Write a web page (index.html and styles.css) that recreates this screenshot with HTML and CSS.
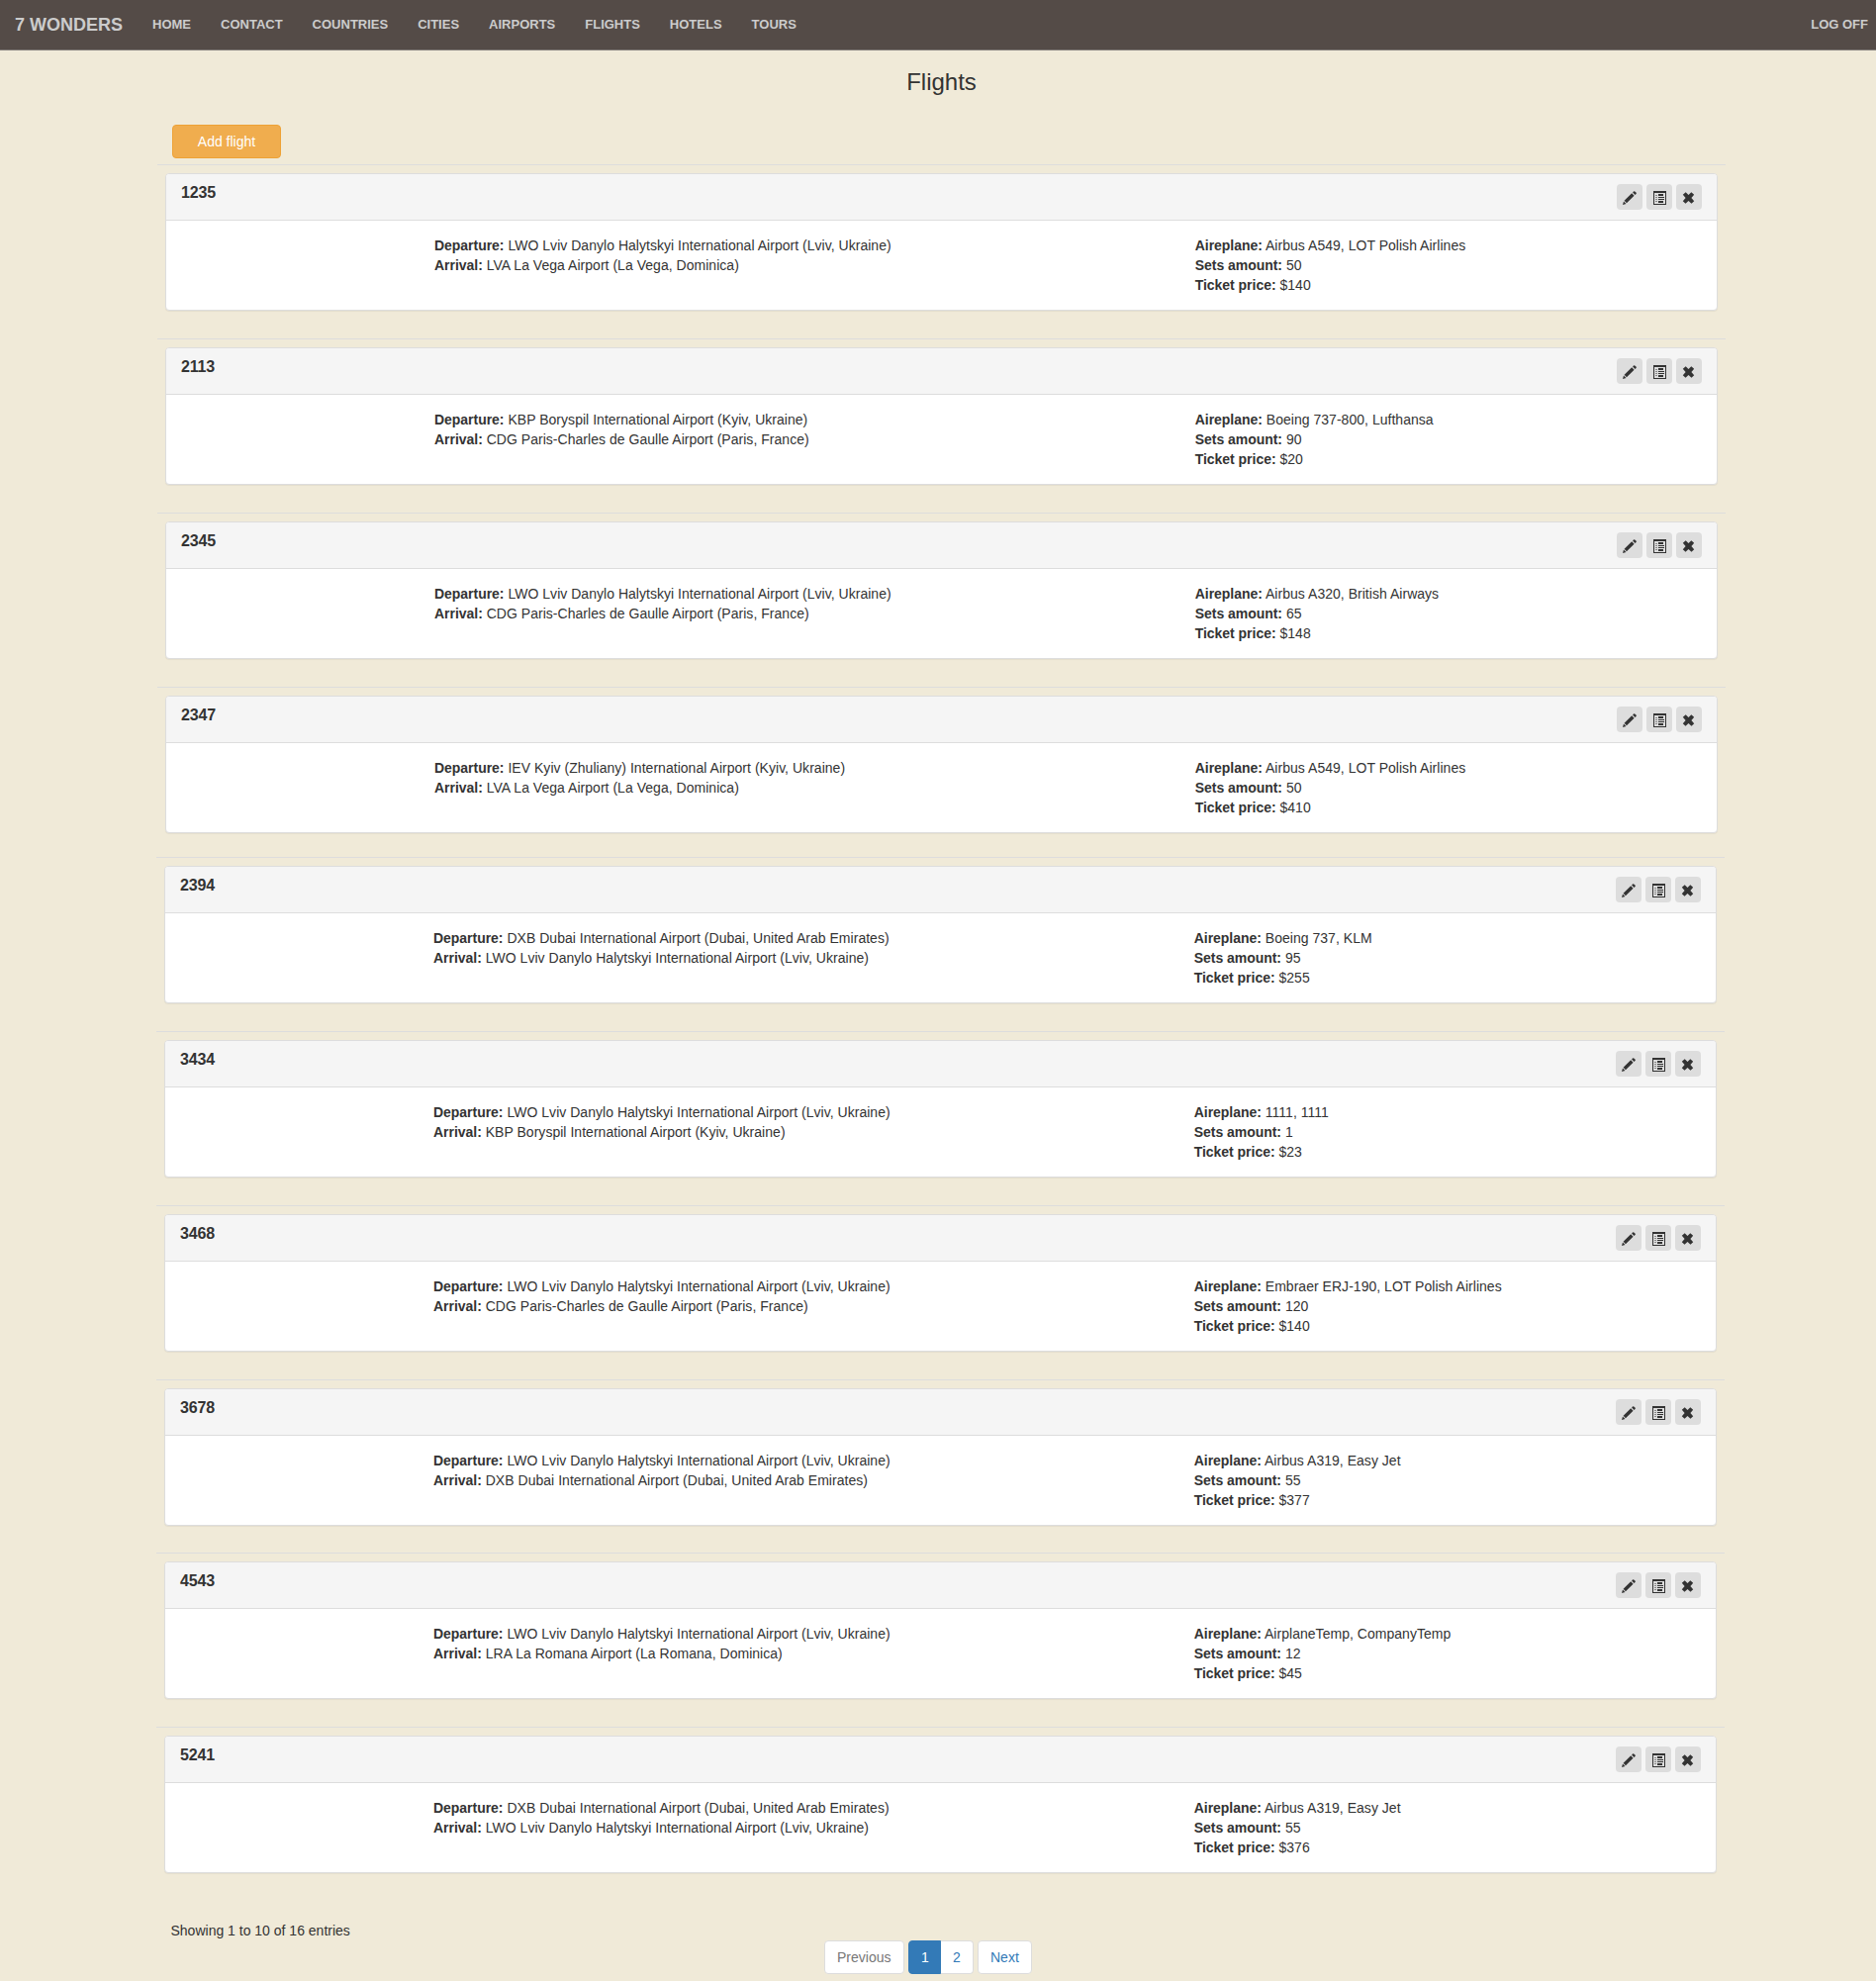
FILE: index.html
```html
<!DOCTYPE html>
<html lang="en">
<head>
<meta charset="utf-8">
<title>Flights</title>
<link rel="stylesheet" href="styles.css">
</head>
<body>
<svg class="sprite" aria-hidden="true">
  <symbol id="pencil" viewBox="0 0 14 14"><path d="M0 14l1-3.500 2.500 2.500zM1.600 9.800l7.600-7.500 2.400 2.400-7.600 7.500zM10.100 1.500l.9-.9q.8-.7 1.600.1l.9.9q.7.8 0 1.500l-1 .9z"/></symbol>
  <symbol id="list" viewBox="0 0 14 14"><path fill-rule="evenodd" d="M1 0h13v14H1zM2 2v11h11V2z"/><path d="M6 3h5v2H6zm0 3h6v1H6zm0 2h6v1H6zm0 2h5v2H6z"/><path opacity=".5" d="M3 4h2v1H3zm0 2h2v1H3zm0 2h2v1H3zm0 2h2v1H3z"/></symbol>
  <symbol id="cross" viewBox="0 0 14 14"><path d="M3.700 1.300L6.500 4 9.300 1.300 12.200 3.700 9.400 7 12.200 10.300 9.500 12.700 6.500 10 3.500 12.700.8 10.300 3.600 7 .8 3.700z"/></symbol>
</svg>
<nav class="navbar">
  <a class="brand">7 WONDERS</a>
  <a>HOME</a><a>CONTACT</a><a>COUNTRIES</a><a>CITIES</a><a>AIRPORTS</a><a>FLIGHTS</a><a>HOTELS</a><a>TOURS</a>
  <a class="logoff">LOG OFF</a>
</nav>
<main>
  <h1>Flights</h1>
  <button class="add">Add flight</button>
  <div id="flights"></div>
  <p class="info">Showing 1 to 10 of 16 entries</p>
  <div class="pagination">
    <a class="page previous">Previous</a>
    <span class="numbers"><a class="page active">1</a><a class="page">2</a></span>
    <a class="page next">Next</a>
  </div>
</main>
<script src="flights.js"></script>
</body>
</html>
```
FILE: styles.css
```css
* { box-sizing: border-box; }
body { margin: 0; background: #f0ead8; color: #333; font: 14px/20px "Liberation Sans", Arial, sans-serif; }
.sprite { display: none; }
.navbar { display: flex; height: 51px; background: #544b47; border-bottom: 1px solid #807b77; padding-left: 15px; color: #ccc; font-weight: bold; font-size: 13px; line-height: 50px; }
.navbar a { padding: 0 15px; white-space: nowrap; }
.navbar .brand { padding: 0 15px 0 0; font-size: 18px; }
.navbar .logoff { margin-left: auto; padding-right: 8px; }
main { display: flow-root; }
h1 { margin: 19px 0 0; padding-left: 7px; text-align: center; font-weight: normal; font-size: 24px; line-height: 26px; }
.add { display: block; width: 110px; height: 34px; margin: 30px 0 6px 174px; padding: 0; border: 1px solid #eea236; border-radius: 4px; background: #f0ad4e; color: #fff; font: inherit; }
.flight { width: 1585px; height: 176px; margin-left: 159px; border-top: 1px solid #ddd; padding: 8px; }
.flight.tight { height: 172px; }
.flight.narrow { height: 175px; }
.flight.shifted { margin-left: 158px; }
.panel { height: 139px; border: 1px solid #ddd; border-radius: 4px; background: #fff; box-shadow: 0 1px 1px rgba(0,0,0,.05); overflow: hidden; }
.heading { display: flex; justify-content: space-between; height: 47px; padding: 10px 15px; background: #f5f5f5; border-bottom: 1px solid #ddd; }
.heading h2 { margin: 0; font-size: 16px; line-height: 17px; letter-spacing: -0.15px; }
.actions { display: flex; gap: 4px; }
.actions span { display: flex; justify-content: center; width: 26px; height: 26px; padding-top: 7px; border-radius: 4px; background: #ddd; color: #333; }
.actions svg { width: 14px; height: 14px; fill: currentColor; }
.body { display: grid; grid-template-columns: 768.7px 1fr; padding: 15px 15px 15px 271px; white-space: nowrap; letter-spacing: 0.03px; }
.body b { letter-spacing: -0.03px; }
.info { margin: 20px 0 0 172.500px; height: 20px; }
.pagination { display: flex; gap: 4px; margin-left: 833px; height: 34px; }
.numbers { display: flex; }
.page { padding: 6px 12px; border: 1px solid #ddd; border-radius: 4px; background: #fff; color: #337ab7; }
.previous { width: 81px; color: #777; }
.next { width: 55px; }
.numbers .page { width: 33px; }
.numbers .page + .page { border-radius: 0 4px 4px 0; border-left: 0; }
.numbers .active { background: #337ab7; border-color: #337ab7; color: #fff; border-radius: 4px 0 0 4px; }
```
FILE: flights.js
```js
const LWO = 'LWO Lviv Danylo Halytskyi International Airport (Lviv, Ukraine)';
const LVA = 'LVA La Vega Airport (La Vega, Dominica)';
const KBP = 'KBP Boryspil International Airport (Kyiv, Ukraine)';
const CDG = 'CDG Paris-Charles de Gaulle Airport (Paris, France)';
const IEV = 'IEV Kyiv (Zhuliany) International Airport (Kyiv, Ukraine)';
const DXB = 'DXB Dubai International Airport (Dubai, United Arab Emirates)';
const LRA = 'LRA La Romana Airport (La Romana, Dominica)';
const flights = [
  ['1235', LWO, LVA, 'Airbus A549, LOT Polish Airlines', 50, 140, ''],
  ['2113', KBP, CDG, 'Boeing 737-800, Lufthansa', 90, 20, ''],
  ['2345', LWO, CDG, 'Airbus A320, British Airways', 65, 148, ''],
  ['2347', IEV, LVA, 'Airbus A549, LOT Polish Airlines', 50, 410, 'tight'],
  ['2394', DXB, LWO, 'Boeing 737, KLM', 95, 255, 'shifted'],
  ['3434', LWO, KBP, '1111, 1111', 1, 23, 'shifted'],
  ['3468', LWO, CDG, 'Embraer ERJ-190, LOT Polish Airlines', 120, 140, 'shifted'],
  ['3678', LWO, DXB, 'Airbus A319, Easy Jet', 55, 377, 'shifted narrow'],
  ['4543', LWO, LRA, 'AirplaneTemp, CompanyTemp', 12, 45, 'shifted'],
  ['5241', DXB, LWO, 'Airbus A319, Easy Jet', 55, 376, 'shifted']
];
const icon = name => `<span><svg><use href="#${name}"/></svg></span>`;
document.getElementById('flights').innerHTML = flights.map(([no, from, to, plane, seats, price, cls]) => `
<section class="flight ${cls}"><div class="panel">
  <div class="heading"><h2>${no}</h2><div class="actions">${icon('pencil')}${icon('list')}${icon('cross')}</div></div>
  <div class="body">
    <div><b>Departure:</b> ${from}<br><b>Arrival:</b> ${to}</div>
    <div><b>Aireplane:</b> ${plane}<br><b>Sets amount:</b> ${seats}<br><b>Ticket price:</b> $${price}</div>
  </div>
</div></section>`).join('');
```
